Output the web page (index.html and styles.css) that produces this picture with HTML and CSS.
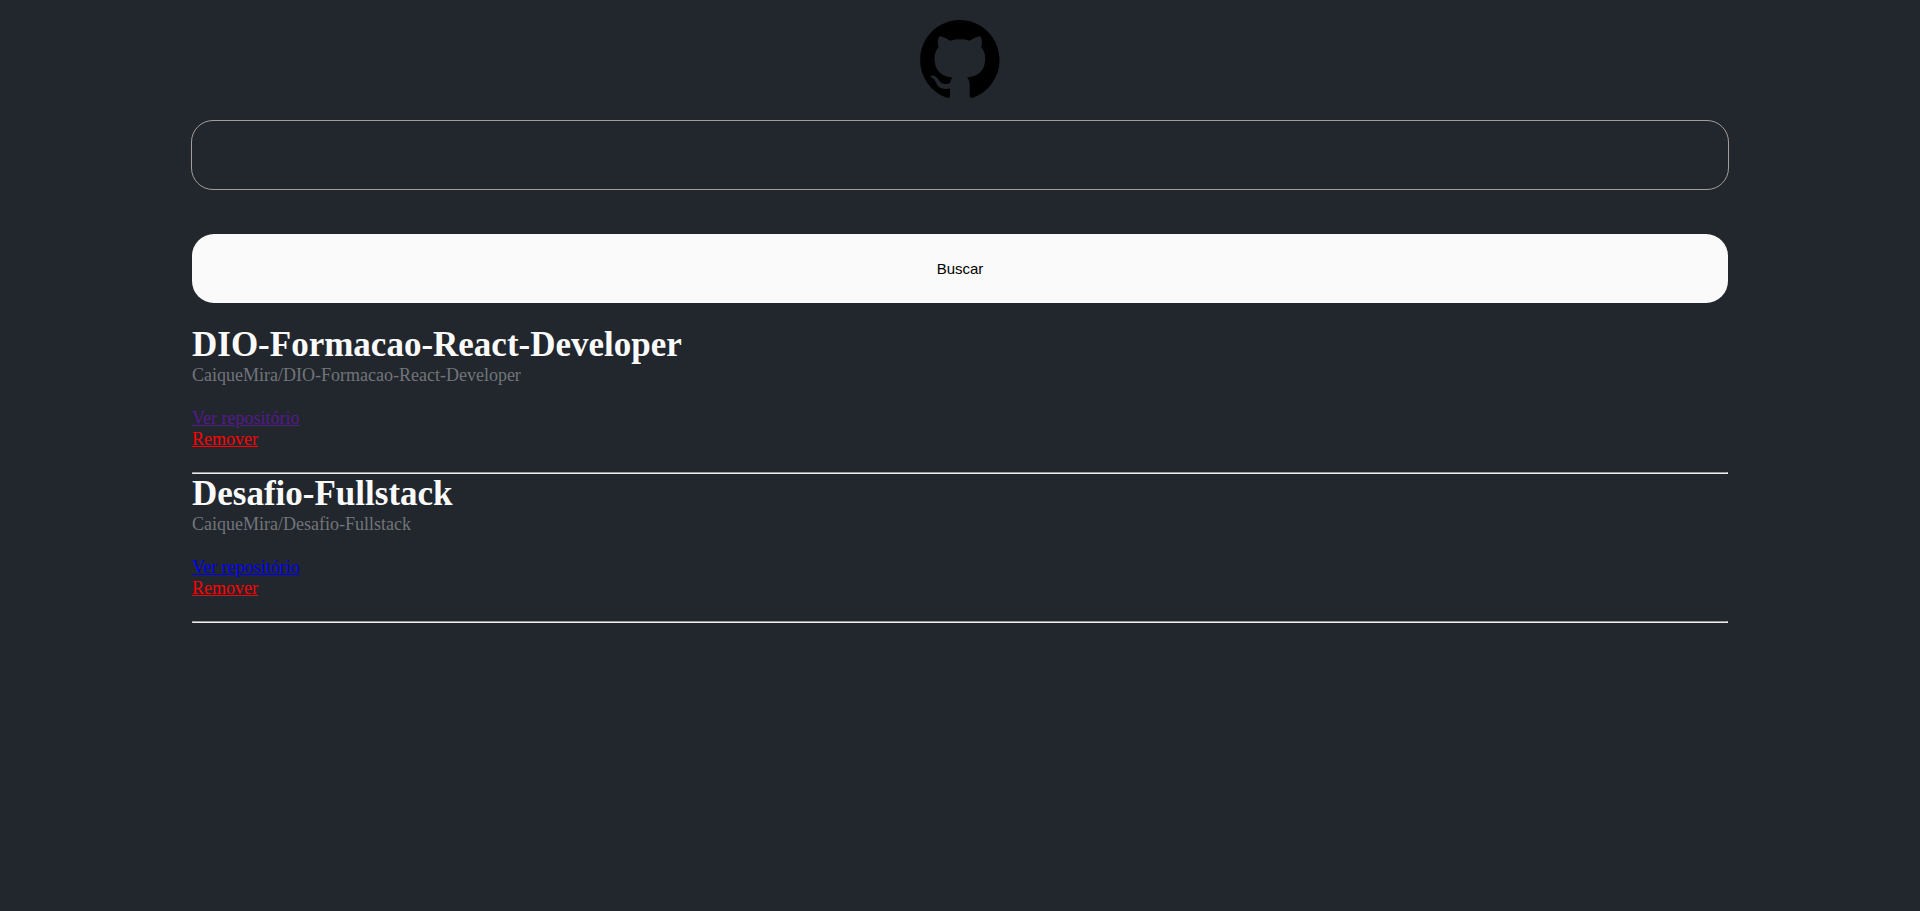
FILE: index.html
```html
<!DOCTYPE html>
<html lang="pt-BR">
<head>
<meta charset="utf-8">
<title>Repositórios</title>
<link rel="stylesheet" href="styles.css">
</head>
<body>
<main class="container">
  <svg class="logo" viewBox="0 0 98 96" role="img" aria-label="GitHub"><path fill-rule="evenodd" clip-rule="evenodd" d="M48.854 0C21.839 0 0 22 0 49.217c0 21.756 13.993 40.172 33.405 46.69 2.427.49 3.316-1.059 3.316-2.362 0-1.141-.08-5.052-.08-9.127-13.59 2.934-16.42-5.867-16.42-5.867-2.184-5.704-5.42-7.17-5.42-7.17-4.448-3.015.324-3.015.324-3.015 4.934.326 7.523 5.052 7.523 5.052 4.367 7.496 11.404 5.378 14.235 4.074.404-3.178 1.699-5.378 3.074-6.6-10.839-1.141-22.243-5.378-22.243-24.283 0-5.378 1.94-9.778 5.014-13.2-.485-1.222-2.184-6.275.486-13.038 0 0 4.125-1.304 13.426 5.052a46.97 46.97 0 0 1 12.214-1.63c4.125 0 8.33.571 12.213 1.63 9.302-6.356 13.427-5.052 13.427-5.052 2.67 6.763.97 11.816.485 13.038 3.155 3.422 5.015 7.822 5.015 13.2 0 18.905-11.404 23.06-22.324 24.283 1.78 1.548 3.316 4.481 3.316 9.126 0 6.6-.08 11.897-.08 13.526 0 1.304.89 2.853 3.316 2.364 19.412-6.52 33.405-24.935 33.405-46.691C97.707 22 75.788 0 48.854 0z"/></svg>
  <input class="search" type="text" aria-label="Repositório">
  <button class="submit" type="button">Buscar</button>
  <article class="repo">
    <h1>DIO-Formacao-React-Developer</h1>
    <p>CaiqueMira/DIO-Formacao-React-Developer</p>
    <a class="view visited" href="#dio">Ver repositório</a>
    <a class="remove" href="#remover-dio">Remover</a>
    <hr>
  </article>
  <article class="repo">
    <h1>Desafio-Fullstack</h1>
    <p>CaiqueMira/Desafio-Fullstack</p>
    <a class="view" href="#desafio">Ver repositório</a>
    <a class="remove" href="#remover-desafio">Remover</a>
    <hr>
  </article>
</main>
</body>
</html>
```
FILE: styles.css
```css
* {
  box-sizing: border-box;
  margin: 0;
  padding: 0;
}

body {
  background: #22272e;
  font-family: "Liberation Serif", "Times New Roman", serif;
  font-size: 18px;
}

.container {
  display: flex;
  flex-direction: column;
  align-items: center;
  width: 80%;
  margin: 0 auto;
  padding-top: 20px;
}

.logo {
  width: 80px;
  height: 78px;
  fill: #000;
}

.search,
.submit {
  border-radius: 22px;
  font-family: "Liberation Sans", Arial, sans-serif;
  font-size: 15px;
}

.search {
  width: calc(100% + 2px);
  height: 70px;
  margin: 22px 0 44px;
  padding: 0 20px;
  border: 1px solid #a39e9b;
  background: transparent;
  color: #fff;
}

.submit {
  width: 100%;
  height: 69px;
  margin-bottom: 22px;
  border: 0;
  background: #fafafa;
  color: #000;
}

.repo {
  width: 100%;
}

.repo h1 {
  color: #fafafa;
  font-size: 35px;
  line-height: 40px;
}

.repo p {
  margin-bottom: 22px;
  color: #fafafa60;
  line-height: 21px;
}

.repo a {
  display: block;
  width: max-content;
  line-height: 21px;
}

.view {
  color: #0000ee;
}

.view.visited {
  color: #551a8b;
}

.remove {
  color: #ff0000;
}

.repo hr {
  margin-top: 22px;
  border: 1px solid;
  border-color: #9a9a9a #eeeeee #eeeeee #9a9a9a;
}
```
